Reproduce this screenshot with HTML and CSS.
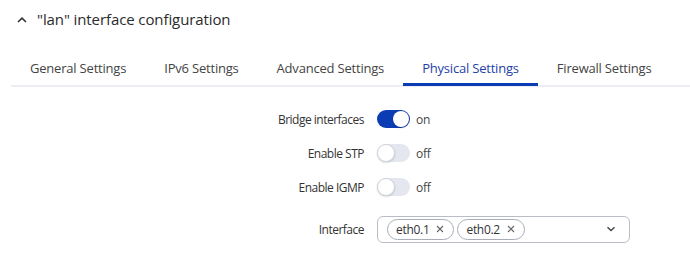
FILE: index.html
```html
<!DOCTYPE html>
<html lang="en">
<head>
  <meta charset="UTF-8" />
  <title>"lan" interface configuration</title>
  <link rel="stylesheet" href="styles.css">
</head>
<body>
  <div class="panel">
    <div class="panel-title">
      <svg class="caret" width="10" height="6" viewBox="0 0 10 6"><path d="M1 5 L5 1.2 L9 5" fill="none" stroke="#333" stroke-width="1.6"/></svg>
      <span>"lan" interface configuration</span>
    </div>

    <div class="tabs">
      <div class="tab">General Settings</div>
      <div class="tab">IPv6 Settings</div>
      <div class="tab">Advanced Settings</div>
      <div class="tab active">Physical Settings</div>
      <div class="tab">Firewall Settings</div>
    </div>

    <div class="form">
      <div class="row">
        <label>Bridge interfaces</label>
        <div class="toggle on"><span class="knob"></span></div>
        <span class="state">on</span>
      </div>
      <div class="row">
        <label>Enable STP</label>
        <div class="toggle"><span class="knob"></span></div>
        <span class="state">off</span>
      </div>
      <div class="row">
        <label>Enable IGMP</label>
        <div class="toggle"><span class="knob"></span></div>
        <span class="state">off</span>
      </div>
      <div class="row row-select">
        <label>Interface</label>
        <div class="multi">
          <span class="chip">eth0.1 <svg class="x" width="8" height="8" viewBox="0 0 8 8"><path d="M1 1 L7 7 M7 1 L1 7" stroke="#666" stroke-width="1.1"/></svg></span>
          <span class="chip">eth0.2 <svg class="x" width="8" height="8" viewBox="0 0 8 8"><path d="M1 1 L7 7 M7 1 L1 7" stroke="#666" stroke-width="1.1"/></svg></span>
          <svg class="arrow" width="10" height="6" viewBox="0 0 10 6"><path d="M1.5 1.2 L5 4.5 L8.5 1.2" fill="none" stroke="#444" stroke-width="1.4"/></svg>
        </div>
      </div>
    </div>
  </div>
</body>
</html>
```

FILE: styles.css
```css
body {
  margin: 0;
  font-family: "Open Sans", "Noto Sans", sans-serif;
  background: white;
  color: #333;
}
.panel {
  padding: 8px 0 0 0;
}
.panel-title {
  display: flex;
  align-items: center;
  gap: 10px;
  padding-left: 17px;
  font-size: 15px;
  font-weight: 500;
  letter-spacing: -0.1px;
  height: 22px;
  color: #2b2b2b;
}
.caret {
  margin-top: 1px;
}
.tabs {
  display: flex;
  margin: 28px 0 0 11px;
  border-bottom: 2px solid #eceef3;
}
.tab {
  flex-shrink: 0;
  white-space: nowrap;
  padding: 0 19px 5px 19px;
  font-size: 13px;
  letter-spacing: -0.2px;
  color: #444;
  line-height: 20px;
  border-bottom: 3px solid transparent;
  margin-bottom: -1px;
}
.tab.active {
  color: #1f3fa8;
  border-bottom-color: #0b3cb4;
}
.form {
  display: flex;
  flex-direction: column;
  margin-top: 15px;
}
.row {
  display: flex;
  align-items: center;
  height: 34px;
  font-size: 12px;
  letter-spacing: -0.3px;
}
.row label {
  width: 377px;
  flex-shrink: 0;
  text-align: right;
  padding-right: 13px;
  box-sizing: border-box;
  letter-spacing: -0.5px;
  color: #333;
}
.toggle {
  width: 33px;
  height: 18px;
  border-radius: 9px;
  background: #e4e7ef;
  position: relative;
  box-sizing: border-box;
}
.toggle .knob {
  position: absolute;
  top: 0;
  left: 0;
  width: 18px;
  height: 18px;
  border-radius: 50%;
  background: white;
  box-sizing: border-box;
  border: 1px solid #d0d4de;
  box-shadow: 0 1px 2px rgba(0,0,0,0.15);
}
.toggle.on {
  background: #0b3cb4;
}
.toggle.on .knob {
  left: 16px;
  width: 16px;
  height: 16px;
  top: 1px;
  border: none;
}
.state {
  margin-left: 6px;
  color: #444;
}
.row-select {
  margin-top: 11px;
  height: 28px;
}
.multi {
  width: 253px;
  height: 27px;
  border: 1px solid #b9bdc8;
  border-radius: 6px;
  box-sizing: border-box;
  display: flex;
  align-items: center;
  gap: 3px;
  padding-left: 9px;
}
.chip {
  display: inline-flex;
  align-items: center;
  height: 21px;
  padding: 0 9px 0 8px;
  border: 1px solid #a9adb8;
  border-radius: 11px;
  box-sizing: border-box;
  font-size: 12px;
  color: #333;
}
.chip .x {
  margin-left: 7px;
}
.arrow {
  margin-left: auto;
  margin-right: 13px;
}
```
